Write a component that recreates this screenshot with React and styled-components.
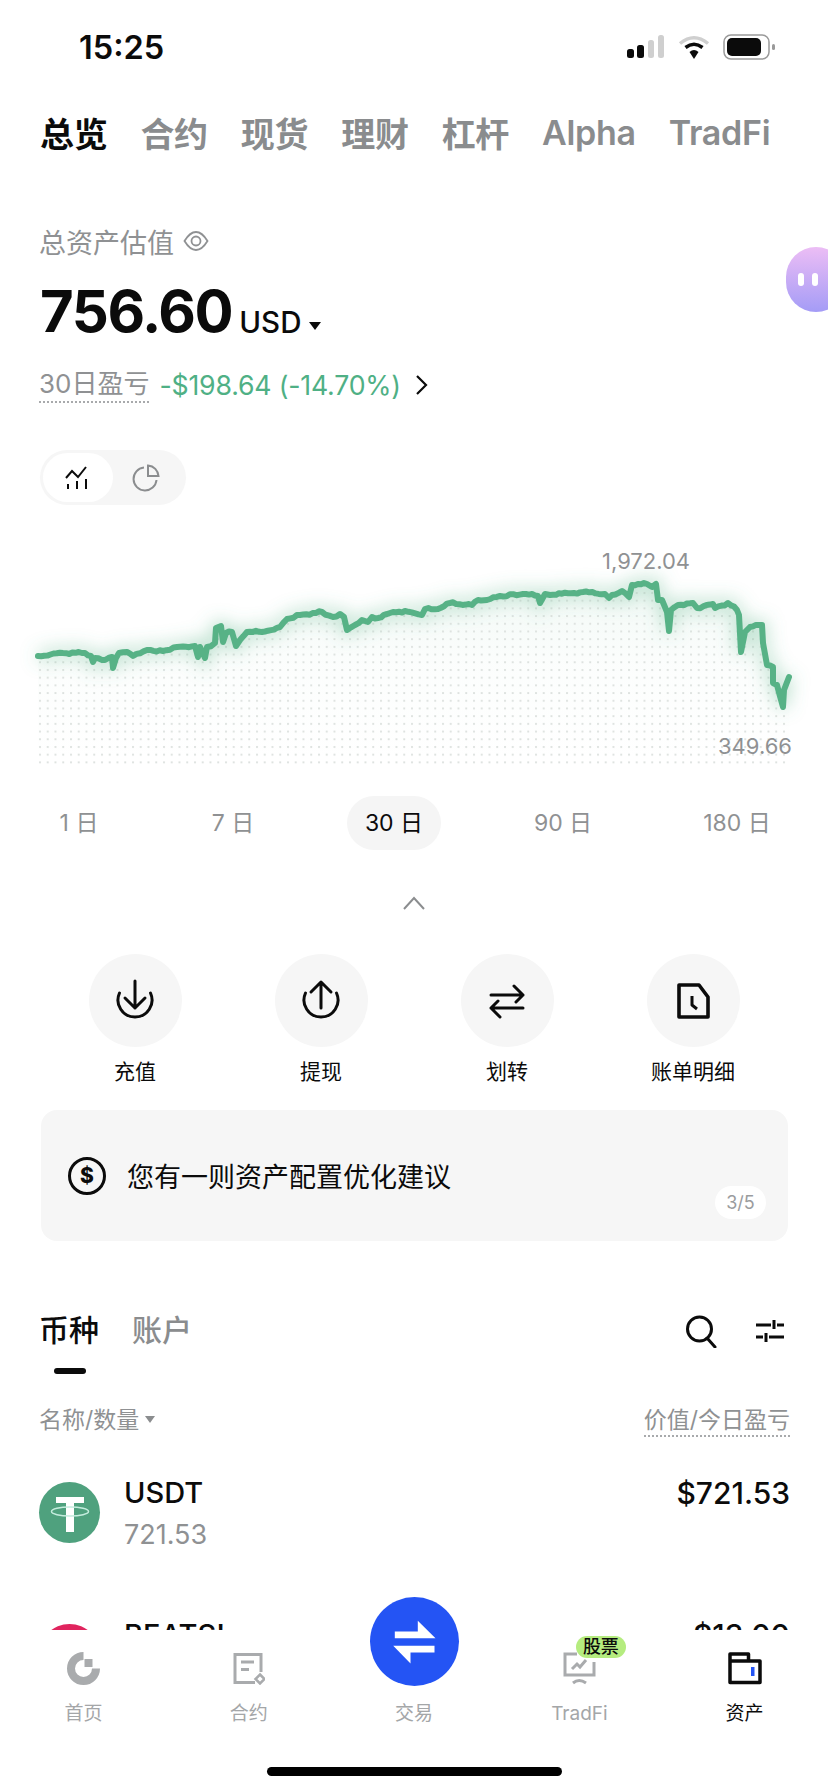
import styled, { createGlobalStyle } from "styled-components";

const GlobalStyle = createGlobalStyle`
  html, body {
    margin: 0;
    padding: 0;
    background: #fff;
  }
  body {
    font-family: Inter, "Noto Sans CJK SC", sans-serif;
    color: #0b0b0b;
  }
`;

const LINE = [
  [38, 656], [63, 653], [85, 653], [91, 656], [93, 662], [95, 658], [105, 660], [112, 657], [113, 668], [116, 658],
  [119, 653], [127, 652], [133, 656], [147, 650], [163, 651], [177, 647], [195, 646], [198, 657], [200, 647], [205, 658],
  [207, 647], [215, 643], [216, 628], [221, 626], [223, 642], [226, 633], [232, 632], [236, 646], [240, 640], [247, 632],
  [262, 632], [280, 627], [287, 619], [300, 615], [322, 612], [333, 617], [340, 614], [344, 617], [347, 630], [355, 625],
  [362, 620], [368, 622], [372, 617], [378, 618], [390, 613], [405, 611], [422, 615], [425, 609], [438, 609], [450, 603],
  [472, 605], [478, 600], [487, 600], [500, 596], [523, 594], [538, 596], [540, 603], [545, 594], [550, 595], [583, 592],
  [605, 594], [609, 598], [612, 595], [622, 591], [629, 597], [632, 585], [647, 584], [652, 587], [656, 584], [658, 600],
  [662, 600], [667, 612], [669, 631], [671, 610], [678, 605], [693, 603], [697, 608], [713, 604], [715, 608], [728, 603],
  [737, 610], [739, 615], [741, 652], [745, 632], [750, 627], [762, 625], [763, 643], [767, 665], [773, 667], [773, 683],
  [777, 685], [783, 707], [784, 690], [789, 677],
];

// the real series is noisy, so break long segments up and wiggle them a bit
const noisy = [];
LINE.forEach(([x, y], i) => {
  if (i === 0) {
    noisy.push([x, y]);
    return;
  }
  const [px, py] = LINE[i - 1];
  const steps = Math.max(1, Math.floor((x - px) / 3));
  for (let s = 1; s <= steps; s++) {
    const nx = px + ((x - px) * s) / steps;
    const ny = py + ((y - py) * s) / steps;
    const wiggle = s === steps ? 0 : Math.sin(nx * 2.3) * 0.7 + Math.sin(nx * 5.1) * 0.5;
    noisy.push([nx.toFixed(1), (ny + wiggle).toFixed(1)]);
  }
});
const linePath = "M" + noisy.map((p) => p.join(" ")).join("L");
const areaPath = linePath + "L790 764L38 764Z";

const TOP_TABS = ["总览", "合约", "现货", "理财", "杠杆", "Alpha", "TradFi"];
const RANGES = ["1 日", "7 日", "30 日", "90 日", "180 日"];

const Chart = () => (
  <ChartBox>
    <ChartSvg viewBox="0 540 828 240">
      <defs>
        <pattern id="dots" x="38" y="591" width="7.75" height="7.7" patternUnits="userSpaceOnUse">
          <circle cx="2" cy="2" r="1.1" fill="#dadfdc" />
        </pattern>
        <linearGradient id="fade" x1="0" y1="0" x2="0" y2="1">
          <stop offset="0" stopColor="#57b286" stopOpacity="0.08" />
          <stop offset="0.45" stopColor="#57b286" stopOpacity="0.02" />
          <stop offset="1" stopColor="#57b286" stopOpacity="0" />
        </linearGradient>
        <filter id="glow" x="-10%" y="-40%" width="120%" height="180%">
          <feGaussianBlur stdDeviation="9" />
        </filter>
      </defs>
      <path d={areaPath} fill="url(#fade)" />
      <path d={areaPath} fill="url(#dots)" />
      <path d={linePath} fill="none" stroke="#57b286" strokeOpacity="0.45" strokeWidth="9" filter="url(#glow)" />
      <path d={linePath} fill="none" stroke="#57b286" strokeWidth="6" strokeLinejoin="round" strokeLinecap="round" />
    </ChartSvg>
    <ChartLabel $top={7} $left={602}>1,972.04</ChartLabel>
    <ChartLabel $top={192} $left={718}>349.66</ChartLabel>
  </ChartBox>
);

const NavIcon = ({ kind }) => {
  if (kind === "home") {
    return (
      <svg width="33" height="33" viewBox="0 0 33 33">
        <path d="M16.5 4A12.5 12.5 0 1 0 29 16.5" fill="none" stroke="#a9abad" strokeWidth="8" />
        <rect x="17.5" y="7" width="8" height="8" fill="#a9abad" />
      </svg>
    );
  }
  if (kind === "contract") {
    return (
      <svg width="33" height="33" viewBox="0 0 33 33" fill="none" stroke="#a9abad" strokeWidth="3">
        <path d="M29 20V2.5H3V30.500H23" />
        <path d="M9 10H22M9 17.500H17" />
        <path d="M28 22.500L32.500 27L28 31.500L23.500 27Z" strokeWidth="2.500" />
      </svg>
    );
  }
  if (kind === "tradfi") {
    return (
      <svg width="33" height="33" viewBox="0 0 33 33" fill="none" stroke="#a9abad" strokeWidth="3">
        <path d="M14 2H2V23H31V10" />
        <path d="M10 31Q16 26 23 31" />
        <path d="M9 17L14 12L17 15L23 8" />
      </svg>
    );
  }
  if (kind === "asset") {
    return (
      <svg width="34" height="33" viewBox="0 0 34 33" fill="none">
        <path d="M2 30.500V2H20.500V9H32V30.500Z M2 9H20.500" stroke="#0b0b0b" strokeWidth="3.500" strokeLinejoin="round" />
        <rect x="23" y="15" width="3.500" height="9" fill="#2454f4" />
      </svg>
    );
  }
  return null;
};

const ActionIcon = ({ kind }) => {
  const common = { fill: "none", stroke: "#0b0b0b", strokeWidth: 3, strokeLinecap: "round", strokeLinejoin: "round" };
  if (kind === "in") {
    return (
      <svg width="44" height="44" viewBox="0 0 44 44" {...common}>
        <path d="M6.500 14A17 17 0 1 0 37.500 14" />
        <path d="M22 2V29M12 19L22 29L32 19" />
      </svg>
    );
  }
  if (kind === "out") {
    return (
      <svg width="44" height="44" viewBox="0 0 44 44" {...common}>
        <path d="M6.500 14A17 17 0 1 0 37.500 14" />
        <path d="M22 29V3M12 13L22 3L32 13" />
      </svg>
    );
  }
  if (kind === "swap") {
    return (
      <svg width="44" height="44" viewBox="0 0 44 44" {...common}>
        <path d="M6 16H38M29 7L38 16L31 23" />
        <path d="M38 29H6M13 22L6 29L15 38" />
      </svg>
    );
  }
  return (
    <svg width="44" height="44" viewBox="0 0 44 44" {...common} strokeLinecap="butt" strokeLinejoin="round" strokeWidth="3.600">
      <path d="M8 6H28L37 18V38H8Z" />
      <path d="M21 17V26L26 30" strokeWidth="3" />
    </svg>
  );
};

const App = () => (
  <Page>
    <GlobalStyle />
    <Content>
      <StatusBar>
        <Time>15:25</Time>
        <StatusIcons>
          <svg width="38" height="24" viewBox="0 0 38 24">
            <rect x="0" y="14" width="7" height="9" rx="2.500" fill="#0b0b0b" />
            <rect x="10" y="10" width="7" height="13" rx="2.500" fill="#0b0b0b" />
            <rect x="21" y="5" width="6" height="18" rx="2.500" fill="#cfcfcf" />
            <rect x="31" y="0" width="6" height="23" rx="2.500" fill="#cfcfcf" />
          </svg>
          <svg width="32" height="24" viewBox="0 0 32 24" fill="none" strokeLinecap="butt">
            <path d="M2 8.500Q16 -3 30 8.500" stroke="#cfcfcf" strokeWidth="3.500" />
            <path d="M7.500 12.500Q16 6 24.500 12.500" stroke="#0b0b0b" strokeWidth="3.500" />
            <path d="M11.500 17L16 24L20.500 17Q16 13 11.500 17Z" fill="#0b0b0b" />
          </svg>
          <svg width="52" height="26" viewBox="0 0 52 26" fill="none">
            <rect x="1" y="1" width="45" height="24" rx="7" stroke="#9a9a9a" strokeWidth="1.500" />
            <rect x="4" y="4" width="34" height="18" rx="5" fill="#0b0b0b" />
            <rect x="49" y="10" width="3" height="6" rx="1.500" fill="#9a9a9a" />
          </svg>
        </StatusIcons>
      </StatusBar>

      <TopTabs>
        {TOP_TABS.map((t, i) => (
          <TopTab key={t} $active={i === 0}>{t}</TopTab>
        ))}
      </TopTabs>

      <Summary>
        <SummaryLabel>
          总资产估值
          <svg width="26" height="26" viewBox="0 0 26 26" fill="none" stroke="#8f9193" strokeWidth="1.800">
            <path d="M1.500 13Q7 4 13 4T24.500 13Q19 22 13 22T1.500 13Z" />
            <circle cx="13" cy="13" r="4.500" />
          </svg>
        </SummaryLabel>
        <BalanceRow>
          <Balance>756.60</Balance>
          <Currency>USD</Currency>
          <Caret $size={6} $color="#0b0b0b" $gap={8} />
        </BalanceRow>
        <PnlRow>
          <DottedLabel>30日盈亏</DottedLabel>
          <PnlValue>-$198.64 (-14.70%)</PnlValue>
          <svg width="13" height="22" viewBox="0 0 13 22" fill="none" stroke="#0b0b0b" strokeWidth="2.200">
            <path d="M2 2L11 11L2 20" />
          </svg>
        </PnlRow>
        <Toggle>
          <ToggleItem $active>
            <svg width="26" height="24" viewBox="0 0 26 24" fill="none" stroke="#0b0b0b" strokeWidth="2">
              <path d="M1 12L7 5L13 11L21 1" />
              <path d="M3 18V23M12 15V23M21 13V23" />
            </svg>
          </ToggleItem>
          <ToggleItem>
            <svg width="28" height="28" viewBox="0 0 28 28" fill="none" stroke="#8b8d8f" strokeWidth="2">
              <path d="M12 3.500A11.500 11.500 0 1 0 24.500 16" />
              <path d="M16 1.500C22 2 26 6.500 26.500 12H16Z" />
            </svg>
          </ToggleItem>
        </Toggle>
      </Summary>

      <Chart />

      <RangeRow>
        {RANGES.map((r, i) => (
          <RangeItem key={r} $active={i === 2}><span>{r}</span></RangeItem>
        ))}
      </RangeRow>

      <CollapseRow>
        <svg width="22" height="14" viewBox="0 0 22 14" fill="none" stroke="#8b8d8f" strokeWidth="2">
          <path d="M1 13L11 2L21 13" />
        </svg>
      </CollapseRow>

      <Actions>
        <Action><ActionCircle><ActionIcon kind="in" /></ActionCircle><ActionLabel>充值</ActionLabel></Action>
        <Action><ActionCircle><ActionIcon kind="out" /></ActionCircle><ActionLabel>提现</ActionLabel></Action>
        <Action><ActionCircle><ActionIcon kind="swap" /></ActionCircle><ActionLabel>划转</ActionLabel></Action>
        <Action><ActionCircle><ActionIcon kind="bill" /></ActionCircle><ActionLabel>账单明细</ActionLabel></Action>
      </Actions>

      <TipCard>
        <Coin>$</Coin>
        <TipText>您有一则资产配置优化建议</TipText>
        <PageBadge>3/5</PageBadge>
      </TipCard>

      <ListHeader>
        <ListTabs>
          <ListTab $active>币种</ListTab>
          <ListTab>账户</ListTab>
        </ListTabs>
        <ListTools>
          <svg width="32" height="34" viewBox="0 0 32 34" fill="none" stroke="#0b0b0b" strokeWidth="3">
            <circle cx="14.500" cy="15" r="12" />
            <path d="M22 24L30 33" strokeLinecap="round" />
          </svg>
          <svg width="30" height="24" viewBox="0 0 30 24" fill="none" stroke="#0b0b0b" strokeWidth="3">
            <path d="M1 6H16M22 6H29M19 1V10" />
            <path d="M1 18H8M14 18H29M11 14V23" />
          </svg>
        </ListTools>
      </ListHeader>
      <ListIndicator />

      <TableHead>
        <HeadLeft>名称/数量<Caret $size={5} $color="#8b8d8f" $gap={6} /></HeadLeft>
        <HeadRight>价值/今日盈亏</HeadRight>
      </TableHead>

      <CoinRow>
        <CoinLogo $bg="#4fa17e">
          <svg width="61" height="61" viewBox="0 0 61 61" fill="none">
            <path d="M17 15H45V21H35V50H27V21H17Z" fill="#fff" />
            <ellipse cx="31" cy="29.500" rx="18.500" ry="4.500" stroke="#c4ecdd" strokeWidth="1.500" />
          </svg>
        </CoinLogo>
        <CoinInfo>
          <CoinName>USDT</CoinName>
          <CoinAmount>721.53</CoinAmount>
        </CoinInfo>
        <CoinValue>$721.53</CoinValue>
      </CoinRow>
      <CoinRow>
        <CoinLogo $bg="#e0245e" />
        <CoinInfo>
          <CoinName>BEATS!</CoinName>
          <CoinAmount>1.20</CoinAmount>
        </CoinInfo>
        <CoinValue>$13.00</CoinValue>
      </CoinRow>
    </Content>

    <Bubble>
      <BubbleEye />
      <BubbleEye />
    </Bubble>

    <BottomNav>
      <NavGrid>
        <NavItem>
          <NavIconBox><NavIcon kind="home" /></NavIconBox>
          <NavLabel>首页</NavLabel>
        </NavItem>
        <NavItem>
          <NavIconBox><NavIcon kind="contract" /></NavIconBox>
          <NavLabel>合约</NavLabel>
        </NavItem>
        <NavItem>
          <TradeButton>
            <svg width="89" height="89" viewBox="0 0 89 89" fill="#fff">
              <path d="M47.800 23.800L65.500 41.200H24.800V34.500H47.800Z" />
              <path d="M64.500 48.800V55.500H40.500V66.500L23.200 48.800Z" />
            </svg>
          </TradeButton>
          <NavIconBox />
          <NavLabel>交易</NavLabel>
        </NavItem>
        <NavItem>
          <NavIconBox>
            <NavIcon kind="tradfi" />
            <StockBadge>股票</StockBadge>
          </NavIconBox>
          <NavLabel>TradFi</NavLabel>
        </NavItem>
        <NavItem>
          <NavIconBox><NavIcon kind="asset" /></NavIconBox>
          <NavLabel $active>资产</NavLabel>
        </NavItem>
      </NavGrid>
      <HomeBar />
    </BottomNav>
  </Page>
);

const Page = styled.div`
  position: relative;
  width: 828px;
  height: 1792px;
  display: flex;
  flex-direction: column;
  overflow: hidden;
  background: #fff;
`;
const Content = styled.div`
  flex: 0 0 1630px;
  overflow: hidden;
`;
const StatusBar = styled.div`
  height: 94px;
  padding: 0 53px 0 79px;
  display: flex;
  align-items: center;
  justify-content: space-between;
`;
const Time = styled.div`
  font-size: 32.5px;
  font-weight: 600;
`;
const StatusIcons = styled.div`
  display: flex;
  align-items: center;
  gap: 13px;
`;
const TopTabs = styled.div`
  height: 76px;
  padding-left: 40px;
  display: flex;
  align-items: center;
  gap: 33px;
`;
const TopTab = styled.div`
  font-size: 34px;
  letter-spacing: -0.3px;
  font-weight: ${(p) => (p.$active ? 700 : 600)};
  color: ${(p) => (p.$active ? "#0b0b0b" : "#8a8c8e")};
`;
const Summary = styled.div`
  padding: 53px 40px 0;
`;
const SummaryLabel = styled.div`
  display: flex;
  align-items: center;
  gap: 9px;
  height: 36px;
  margin-left: -1px;
  font-size: 27px;
  color: #8f9193;
`;
const BalanceRow = styled.div`
  margin-top: 17px;
  height: 70px;
  display: flex;
  align-items: baseline;
`;
const Balance = styled.div`
  font-size: 58px;
  font-weight: 700;
  line-height: 70px;
  letter-spacing: -1.4px;
`;
const Currency = styled.div`
  margin-left: 7px;
  font-size: 29.5px;
  font-weight: 500;
  transform: translateY(1px);
`;
const Caret = styled.span`
  display: inline-block;
  margin-left: ${(p) => p.$gap}px;
  border-left: ${(p) => p.$size}px solid transparent;
  border-right: ${(p) => p.$size}px solid transparent;
  border-top: ${(p) => p.$size + 2}px solid ${(p) => p.$color};
  vertical-align: middle;
  transform: translateY(-2px);
`;
const PnlRow = styled.div`
  margin-top: 21px;
  height: 36px;
  display: flex;
  align-items: center;
`;
const DottedLabel = styled.div`
  font-size: 26px;
  line-height: 34px;
  color: #8f9193;
  border-bottom: 2px dotted #a8aaac;
  margin-left: -1px;
`;
const PnlValue = styled.div`
  margin: 0 14px 0 10px;
  font-size: 26.700px;
  letter-spacing: -0.2px;
  color: #4fb085;
`;
const Toggle = styled.div`
  margin-top: 47px;
  width: 146px;
  height: 55px;
  padding: 3px;
  box-sizing: border-box;
  display: flex;
  border-radius: 28px;
  background: #f6f6f6;
`;
const ToggleItem = styled.div`
  width: ${(p) => (p.$active ? 70 : 66)}px;
  display: flex;
  align-items: center;
  justify-content: center;
  border-radius: 25px;
  background: ${(p) => (p.$active ? "#fff" : "transparent")};
`;
const ChartBox = styled.div`
  position: relative;
  margin-top: 35px;
  height: 240px;
`;
const ChartSvg = styled.svg`
  display: block;
  width: 828px;
  height: 240px;
`;
const ChartLabel = styled.div`
  position: absolute;
  top: ${(p) => p.$top}px;
  left: ${(p) => p.$left}px;
  font-size: 22px;
  line-height: 28px;
  color: #8f9193;
`;
const RangeRow = styled.div`
  margin-top: 16px;
  display: grid;
  grid-template-columns: 158px 150px 172px 166px 182px;
`;
const RangeItem = styled.div`
  display: flex;
  justify-content: center;
  span {
    width: 94px;
    height: 54px;
    padding-bottom: 4px;
    box-sizing: border-box;
    display: flex;
    align-items: center;
    justify-content: center;
    white-space: nowrap;
    border-radius: 27px;
    font-size: 23px;
    color: ${(p) => (p.$active ? "#0b0b0b" : "#8f9193")};
    background: ${(p) => (p.$active ? "#f5f5f5" : "transparent")};
  }
`;
const CollapseRow = styled.div`
  margin-top: 46px;
  height: 14px;
  display: flex;
  justify-content: center;
  svg {
    display: block;
  }
`;
const Actions = styled.div`
  margin-top: 44px;
  padding-left: 42px;
  display: grid;
  grid-template-columns: repeat(4, 186px);
`;
const Action = styled.div`
  display: flex;
  flex-direction: column;
  align-items: center;
`;
const ActionCircle = styled.div`
  width: 93px;
  height: 93px;
  border-radius: 50%;
  background: #f6f6f6;
  display: flex;
  align-items: center;
  justify-content: center;
`;
const ActionLabel = styled.div`
  margin-top: 10px;
  font-size: 21px;
  line-height: 30px;
`;
const TipCard = styled.div`
  position: relative;
  margin: 23px 40px 0 41px;
  height: 131px;
  padding-left: 27px;
  display: flex;
  align-items: center;
  gap: 21px;
  border-radius: 16px;
  background: #f6f6f6;
`;
const Coin = styled.div`
  width: 38px;
  height: 38px;
  box-sizing: border-box;
  border: 3.5px solid #0b0b0b;
  border-radius: 50%;
  display: flex;
  align-items: center;
  justify-content: center;
  font-size: 21px;
  font-weight: 800;
`;
const TipText = styled.div`
  font-size: 27px;
`;
const PageBadge = styled.div`
  position: absolute;
  right: 22px;
  bottom: 22px;
  width: 51px;
  height: 33px;
  border-radius: 17px;
  background: #fff;
  color: #9a9c9e;
  font-size: 18px;
  display: flex;
  align-items: center;
  justify-content: center;
`;
const ListHeader = styled.div`
  margin-top: 68px;
  height: 44px;
  padding: 0 43px 0 39px;
  display: flex;
  align-items: center;
  justify-content: space-between;
`;
const ListTabs = styled.div`
  display: flex;
  gap: 33px;
  margin-bottom: 7px;
`;
const ListTab = styled.div`
  font-size: 30px;
  font-weight: 500;
  color: ${(p) => (p.$active ? "#0b0b0b" : "#8a8c8e")};
`;
const ListTools = styled.div`
  display: flex;
  align-items: center;
  gap: 38px;
`;
const ListIndicator = styled.div`
  margin: 15px 0 0 54px;
  width: 32px;
  height: 6px;
  border-radius: 3px;
  background: #0b0b0b;
`;
const TableHead = styled.div`
  margin-top: 31px;
  padding: 0 38px 0 39px;
  display: flex;
  justify-content: space-between;
  font-size: 23px;
  line-height: 30px;
  color: #8f9193;
`;
const HeadLeft = styled.div``;
const HeadRight = styled.div`
  border-bottom: 2px dotted #a8aaac;
`;
const CoinRow = styled.div`
  height: 142px;
  padding: 0 38px 0 39px;
  display: flex;
  gap: 24px;
  ${TableHead} + & {
    margin-top: 36px;
  }
`;
const CoinLogo = styled.div`
  flex: none;
  width: 61px;
  height: 61px;
  margin-top: 9px;
  border-radius: 50%;
  background: ${(p) => p.$bg};
`;
const CoinInfo = styled.div`
  flex: 1;
`;
const CoinName = styled.div`
  font-size: 29px;
  font-weight: 500;
  line-height: 40px;
`;
const CoinAmount = styled.div`
  margin-top: 2px;
  font-size: 27px;
  line-height: 40px;
  color: #8f9193;
`;
const CoinValue = styled.div`
  font-size: 30px;
  font-weight: 500;
  line-height: 40px;
`;
const Bubble = styled.div`
  position: absolute;
  top: 247px;
  left: 786px;
  width: 60px;
  height: 65px;
  padding-left: 12px;
  box-sizing: border-box;
  display: flex;
  align-items: center;
  gap: 8px;
  border-radius: 30px;
  background: linear-gradient(#ecbdf5, #a49cf6);
`;
const BubbleEye = styled.div`
  width: 6px;
  height: 13px;
  border-radius: 3px;
  background: #fff;
`;
const BottomNav = styled.div`
  position: relative;
  flex: 1;
  background: #fff;
  padding-top: 22px;
`;
const NavGrid = styled.div`
  display: grid;
  grid-template-columns: repeat(5, 165.25px);
  padding-left: 1px;
`;
const NavItem = styled.div`
  position: relative;
  display: flex;
  flex-direction: column;
  align-items: center;
`;
const NavIconBox = styled.div`
  position: relative;
  height: 33px;
  svg {
    display: block;
  }
`;
const NavLabel = styled.div`
  margin-top: 16px;
  font-size: 19px;
  line-height: 26px;
  color: ${(p) => (p.$active ? "#0b0b0b" : "#a4a6a8")};
`;
const TradeButton = styled.div`
  position: absolute;
  top: -55px;
  left: 38px;
  width: 89px;
  height: 89px;
  border-radius: 50%;
  background: #2454f4;
`;
const StockBadge = styled.div`
  position: absolute;
  top: -16px;
  left: 13px;
  width: 50px;
  height: 22px;
  border-radius: 11px;
  background: #b5ec7f;
  color: #0b0b0b;
  font-size: 18px;
  font-weight: 500;
  line-height: 22px;
  text-align: center;
  white-space: nowrap;
`;
const HomeBar = styled.div`
  width: 295px;
  height: 9px;
  margin: 40px auto 0;
  border-radius: 5px;
  background: #000;
`;

export default App;
